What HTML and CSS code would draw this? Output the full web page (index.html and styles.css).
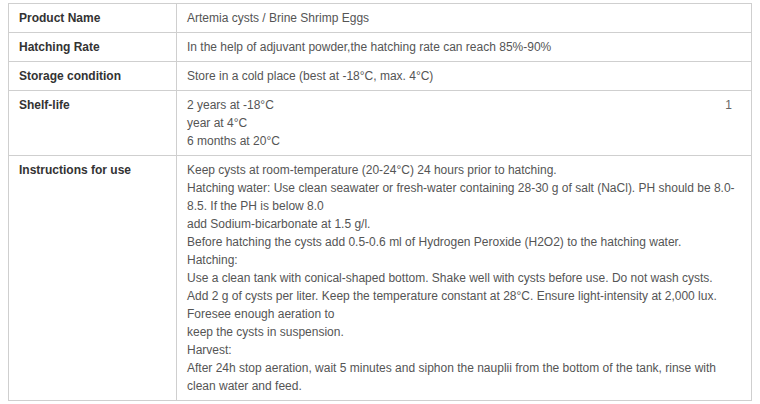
FILE: index.html
```html
<!DOCTYPE html>
<html>
<head>
<meta charset="utf-8">
<link rel="stylesheet" href="styles.css">
</head>
<body>
<table class="spec">
  <colgroup><col class="c-label"><col class="c-value"></colgroup>
  <tr><th>Product Name</th><td>Artemia cysts / Brine Shrimp Eggs</td></tr>
  <tr><th>Hatching Rate</th><td>In the help of adjuvant powder,the hatching rate can reach 85%-90%</td></tr>
  <tr><th>Storage condition</th><td>Store in a cold place (best at -18°C, max. 4°C)</td></tr>
  <tr><th>Shelf-life</th><td><div class="first-line"><span>2 years at -18°C</span><span class="stray">1</span></div>year at 4°C<br>6 months at 20°C</td></tr>
  <tr><th>Instructions for use</th><td>Keep cysts at room-temperature (20-24°C) 24 hours prior to hatching.<br>Hatching water: Use clean seawater or fresh-water containing 28-30 g of salt (NaCl). PH should be 8.0-8.5. If the PH is below 8.0<br>add Sodium-bicarbonate at 1.5 g/l.<br>Before hatching the cysts add 0.5-0.6 ml of Hydrogen Peroxide (H2O2) to the hatching water.<br>Hatching:<br>Use a clean tank with conical-shaped bottom. Shake well with cysts before use. Do not wash cysts.<br>Add 2 g of cysts per liter. Keep the temperature constant at 28°C. Ensure light-intensity at 2,000 lux.<br>Foresee enough aeration to<br>keep the cysts in suspension.<br>Harvest:<br>After 24h stop aeration, wait 5 minutes and siphon the nauplii from the bottom of the tank, rinse with clean water and feed.</td></tr>
</table>
</body>
</html>
```
FILE: styles.css
```css
html, body {
  background: #ffffff;
}
body {
  margin: 3px 8px 0 8px;
  font-family: "Liberation Sans", Arial, sans-serif;
  font-size: 12px;
  line-height: 18px;
  color: #444;
}
.spec {
  width: 744px;
  border-collapse: collapse;
  table-layout: fixed;
}
.c-label { width: 168px; }
.spec th, .spec td {
  border: 1px solid #cfcfcf;
  padding: 5px 10px;
  vertical-align: top;
  text-align: left;
}
.spec th {
  font-weight: bold;
  color: #333;
}
.spec td {
  color: #555;
}
.first-line {
  display: flex;
  justify-content: space-between;
  padding-right: 9px;
}
.stray {
  color: #666;
}
```
